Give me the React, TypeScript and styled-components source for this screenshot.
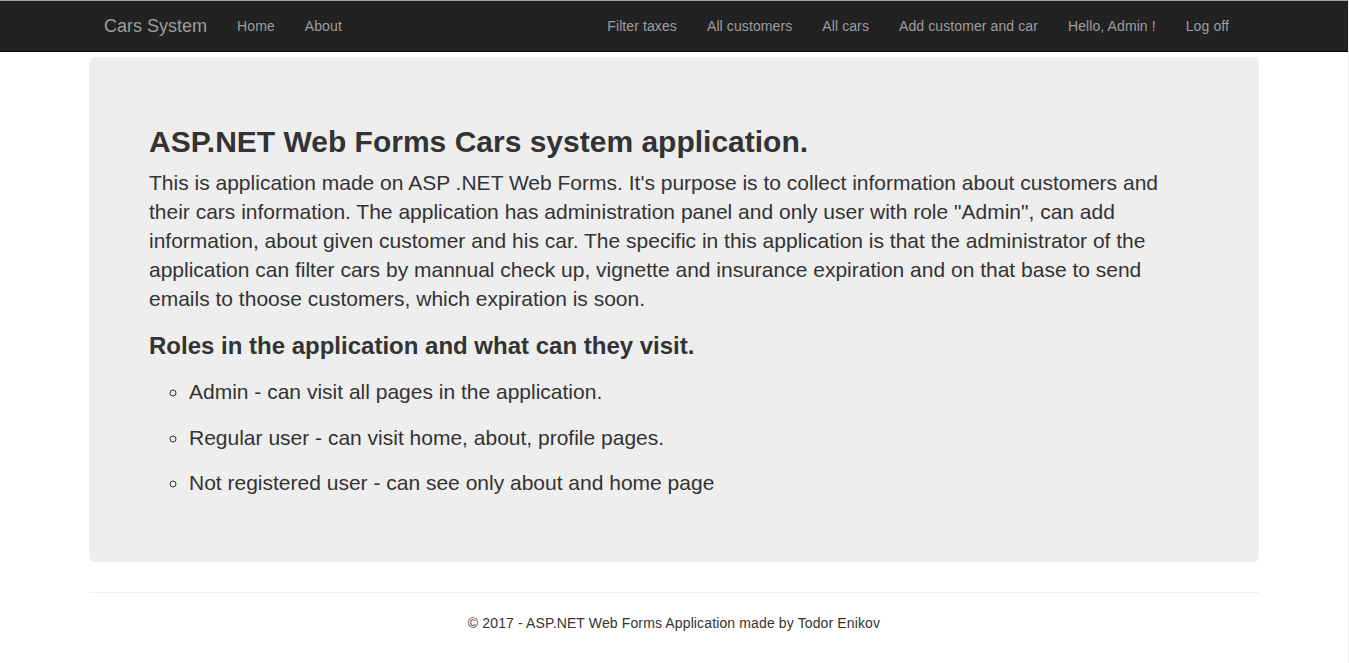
import React from "react";
import styled, { createGlobalStyle } from "styled-components";

const GlobalStyle = createGlobalStyle`
  html {
    margin: 0;
    padding: 0;
    background: #f0f0f0;
  }
  body {
    margin: 0 1px 0 0;
    padding: 0;
    min-height: 100vh;
    background: #fff;
    font-family: "Liberation Sans", Helvetica, Arial, sans-serif;
    font-size: 14px;
    line-height: 1.42857;
    color: #333;
  }
  * { box-sizing: border-box; }
`;

const Navbar = styled.nav`
  background: #222;
  border-top: 1px solid #a9a9a9;
  border-bottom: 1px solid #080808;
  height: 52px;
`;

const NavInner = styled.div`
  width: 1170px;
  margin: 0 auto;
  padding-right: 15px;
  display: flex;
  align-items: center;
  height: 50px;
`;

const Brand = styled.a`
  font-size: 18px;
  line-height: 20px;
  padding: 15px;
  color: #9d9d9d;
  text-decoration: none;
`;

const NavList = styled.ul<{ $right?: boolean }>`
  list-style: none;
  margin: 0;
  padding: 0;
  display: flex;
  margin-left: ${(p) => (p.$right ? "auto" : "0")};
`;

const NavLink = styled.a`
  display: block;
  font-size: 14px;
  line-height: 20px;
  padding: 15px;
  color: #9d9d9d;
  letter-spacing: 0.1px;
  text-decoration: none;
`;

const Container = styled.div`
  width: 1170px;
  margin: 0 auto;
  padding-top: 5px;
`;

const Jumbotron = styled.section`
  background: #eee;
  border-radius: 6px;
  padding: 48px 60px 48px;
  margin-bottom: 30px;
`;

const Title = styled.h2`
  font-size: 30px;
  line-height: 33px;
  font-weight: 700;
  margin: 20px 0 10px;
`;

const Lead = styled.p`
  font-size: 21px;
  line-height: 29px;
  font-weight: 200;
  margin: 0 0 20px;
`;

const SubTitle = styled.h3`
  font-size: 24px;
  line-height: 26px;
  font-weight: 700;
  margin: 0 0 18px;
`;

const RoleList = styled.ul`
  list-style-type: circle;
  margin: 0;
  padding-left: 40px;
`;

const RoleItem = styled.li`
  font-size: 21px;
  line-height: 30px;
  font-weight: 200;
  margin-bottom: 15.5px;
`;

const Rule = styled.hr`
  border: 0;
  border-top: 1px solid #eee;
  margin: 0 0 20px;
`;

const Footer = styled.footer`
  text-align: center;
  font-size: 14px;
  line-height: 20px;
  letter-spacing: 0.13px;
`;

const FooterText = styled.p`
  margin: 0 0 10px;
`;

export default function App() {
  return (
    <>
      <GlobalStyle />
      <Navbar>
        <NavInner>
          <Brand href="#">Cars System</Brand>
          <NavList>
            <li><NavLink href="#">Home</NavLink></li>
            <li><NavLink href="#">About</NavLink></li>
          </NavList>
          <NavList $right>
            <li><NavLink href="#">Filter taxes</NavLink></li>
            <li><NavLink href="#">All customers</NavLink></li>
            <li><NavLink href="#">All cars</NavLink></li>
            <li><NavLink href="#">Add customer and car</NavLink></li>
            <li><NavLink href="#">Hello, Admin !</NavLink></li>
            <li><NavLink href="#">Log off</NavLink></li>
          </NavList>
        </NavInner>
      </Navbar>
      <Container>
        <Jumbotron>
          <Title>ASP.NET Web Forms Cars system application.</Title>
          <Lead>
            This is application made on ASP .NET Web Forms. It's purpose is to collect information about customers and
            their cars information. The application has administration panel and only user with role "Admin", can add
            information, about given customer and his car. The specific in this application is that the administrator of the
            application can filter cars by mannual check up, vignette and insurance expiration and on that base to send
            emails to thoose customers, which expiration is soon.
          </Lead>
          <SubTitle>Roles in the application and what can they visit.</SubTitle>
          <RoleList>
            <RoleItem>Admin - can visit all pages in the application.</RoleItem>
            <RoleItem>Regular user - can visit home, about, profile pages.</RoleItem>
            <RoleItem>Not registered user - can see only about and home page</RoleItem>
          </RoleList>
        </Jumbotron>
        <Rule />
        <Footer>
          <FooterText>© 2017 - ASP.NET Web Forms Application made by Todor Enikov</FooterText>
        </Footer>
      </Container>
    </>
  );
}
